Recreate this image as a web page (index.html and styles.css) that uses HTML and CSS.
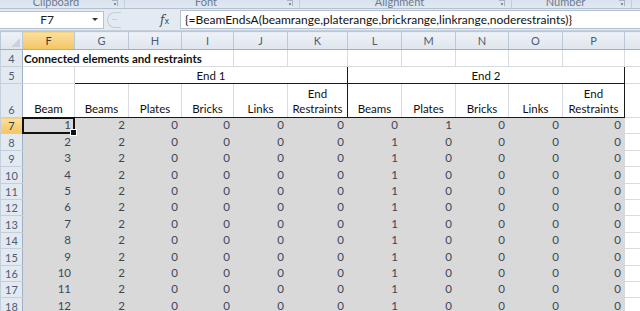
FILE: index.html
```html
<!DOCTYPE html>
<html lang="en">
<head>
    <meta charset="UTF-8">
    <title>Beam ends</title>
    <link rel="stylesheet" href="styles.css">
</head>
<body>
    <div class="ribbon">
        <div class="group g-clip"><span class="group-label">Clipboard</span><span class="launcher"></span></div>
        <div class="group g-font"><span class="group-label">Font</span><span class="launcher"></span></div>
        <div class="group g-align"><span class="group-label">Alignment</span><span class="launcher"></span></div>
        <div class="group g-num"><span class="group-label">Number</span><span class="launcher"></span></div>
    </div>

    <div class="formula-bar">
        <div class="name-box">
            <span class="name">F7</span>
            <span class="drop"></span>
        </div>
        <div class="grip"><span></span></div>
        <div class="fx"><i>f</i><small>x</small></div>
        <div class="formula">{=BeamEndsA(beamrange,platerange,brickrange,linkrange,noderestraints)}</div>
    </div>

    <table class="sheet">
        <colgroup>
            <col class="w-rh"><col class="w-f"><col class="w-g"><col class="w-h"><col class="w-i"><col class="w-j">
            <col class="w-k"><col class="w-l"><col class="w-m"><col class="w-n"><col class="w-o"><col class="w-p"><col class="w-q">
        </colgroup>
        <thead>
            <tr class="heads">
                <th class="corner"><span></span></th>
                <th class="on">F</th><th>G</th><th>H</th><th>I</th><th>J</th><th>K</th>
                <th>L</th><th>M</th><th>N</th><th>O</th><th>P</th><th></th>
            </tr>
        </thead>
        <tbody id="rows">
            <tr class="r4">
                <th class="rh">4</th>
                <td class="title" colspan="4">Connected elements and restraints</td>
                <td></td><td></td><td></td><td></td><td></td><td></td><td></td><td></td>
            </tr>
            <tr class="r5">
                <th class="rh">5</th>
                <td></td>
                <td class="end" colspan="5">End 1</td>
                <td class="end" colspan="5">End 2</td>
                <td></td>
            </tr>
            <tr class="r6">
                <th class="rh">6</th>
                <td class="lbl">Beam</td>
                <td class="lbl box-l">Beams</td><td class="lbl">Plates</td><td class="lbl">Bricks</td><td class="lbl">Links</td>
                <td class="lbl box-r">End<br>Restraints</td>
                <td class="lbl">Beams</td><td class="lbl">Plates</td><td class="lbl">Bricks</td><td class="lbl">Links</td>
                <td class="lbl box-r">End<br>Restraints</td>
                <td class="free"></td>
            </tr>
        </tbody>
    </table>

    <script>
        const body = document.getElementById("rows");

        for (let i = 0; i < 12; i++) {
            let values = i === 0
                ? [1, 2, 0, 0, 0, 0, 0, 1, 0, 0, 0]
                : [i + 1, 2, 0, 0, 0, 0, 1, 0, 0, 0, 0];
            let tr = document.createElement("tr");
            tr.className = "data";
            let head = `<th class="rh${i === 0 ? " on" : ""}">${i + 7}</th>`;
            let cells = values.map((v, c) => `<td class="${i === 0 && c === 0 ? "num active" : "num"}">${v}</td>`).join("");
            tr.innerHTML = head + cells + `<td class="free"></td>`;
            body.appendChild(tr);
        }
    </script>
</body>
</html>
```

FILE: styles.css
```css
* {
    margin: 0;
    padding: 0;
    box-sizing: border-box;
}

body {
    width: 640px;
    height: 311px;
    overflow: hidden;
    background: #fff;
    font-family: Lato, "Open Sans", sans-serif;
}

/* ribbon group captions (cut off at the top) */
.ribbon {
    display: flex;
    height: 9px;
    overflow: hidden;
    background: linear-gradient(#d9e2ed, #e1e8f1);
    border-bottom: 1px solid #b3c0d0;
}

.group {
    display: flex;
    align-items: flex-end;
    border-right: 1px solid #c3cedb;
}

.g-clip { width: 125px; }
.g-font { width: 175px; }
.g-align { width: 212px; }
.g-num { width: 120px; }

.group-label {
    flex: 1;
    text-align: center;
    font-size: 11px;
    line-height: 11px;
    margin-bottom: 1px;
    color: #6b7b91;
}

.launcher {
    width: 6px;
    height: 6px;
    margin: 0 6px 2px 0;
    border-top: 1px solid #a9b5c4;
    border-right: 1px solid #a9b5c4;
    position: relative;
}

.launcher::after {
    content: "";
    position: absolute;
    right: 1px;
    top: 2px;
    width: 2px;
    height: 2px;
    background: #7d8da2;
}

/* formula bar */
.formula-bar {
    display: flex;
    align-items: center;
    height: 22px;
    background: #e4eaf2;
    border-bottom: 1px solid #c5d0dd;
}

.name-box {
    display: flex;
    align-items: center;
    width: 104px;
    height: 18px;
    background: #fff;
    border: 1px solid #b4c1d1;
    border-left: none;
}

.name {
    flex: 1;
    text-align: center;
    font-size: 12px;
    color: #222;
    padding-left: 2px;
}

.drop {
    width: 0;
    height: 0;
    margin-right: 5px;
    border-left: 3px solid transparent;
    border-right: 3px solid transparent;
    border-top: 3px solid #333;
}

.grip {
    width: 14px;
    height: 16px;
    margin-left: 3px;
    border: 1px solid #c3ccd8;
    border-right: none;
    border-radius: 8px 0 0 8px;
    display: flex;
    align-items: center;
    justify-content: center;
}

.grip span {
    width: 5px;
    height: 1px;
    background: #c6ced9;
}

.fx {
    width: 20px;
    margin-left: 39px;
    font-family: "DejaVu Serif", serif;
    font-size: 12px;
    color: #4a4a4a;
}

.fx small {
    font-size: 8px;
    font-family: "DejaVu Sans", sans-serif;
}

.formula {
    flex: 1;
    height: 19px;
    line-height: 17px;
    background: #fff;
    border: 1px solid #b4c1d1;
    border-right: none;
    padding-left: 4px;
    font-size: 12px;
    color: #111;
    white-space: nowrap;
}

/* worksheet grid */
.sheet {
    table-layout: fixed;
    border-collapse: collapse;
    width: 640px;
    font-size: 11.5px;
}

.w-rh { width: 22px; }
.w-f { width: 52px; }
.w-g { width: 54px; }
.w-h { width: 53px; }
.w-i { width: 52px; }
.w-j { width: 54px; }
.w-k { width: 60px; }
.w-l { width: 54px; }
.w-m { width: 54px; }
.w-n { width: 53px; }
.w-o { width: 54px; }
.w-p { width: 62px; }
.w-q { width: 16px; }

td {
    border: 1px solid #d8dbe0;
    padding: 0 3px 1px;
    vertical-align: bottom;
    white-space: nowrap;
    color: #111;
}

.heads th {
    height: 18px;
    font-weight: normal;
    font-size: 11px;
    color: #4c5d74;
    background: linear-gradient(#eef2f7, #dfe5ed);
    border: 1px solid #bcc7d5;
    border-bottom-color: #9fb0c5;
}

.heads th.on {
    background: linear-gradient(#fbe0a0, #f3c55f);
    color: #3a3a3a;
}

.corner {
    position: relative;
}

.corner span {
    position: absolute;
    right: 2px;
    bottom: 2px;
    border-left: 9px solid transparent;
    border-bottom: 9px solid #c8d1dc;
}

.rh {
    font-weight: normal;
    font-size: 11px;
    text-align: center;
    vertical-align: bottom;
    padding-bottom: 1px;
    color: #4c5d74;
    background: #e3e9f1;
    border: 1px solid #c4cfdc;
    border-right-color: #9fb0c5;
}

.rh.on {
    background: linear-gradient(#fbe0a0, #f3c55f);
    color: #3a3a3a;
}

.r4 { height: 17px; }
.r5 { height: 17px; }
.r6 { height: 34px; }
.data { height: 16.4px; }

.title {
    font-weight: bold;
    padding-left: 1px;
}

.end {
    text-align: center;
    border: 1px solid #1a1a1a;
}

.lbl {
    text-align: center;
    line-height: 15px;
    white-space: normal;
    border-bottom: 1px solid #1a1a1a;
}

.box-l { border-left: 1px solid #1a1a1a; }
.box-r { border-right: 1px solid #1a1a1a; }

.r6 .free { border-bottom-color: #d8dbe0; }

.num {
    text-align: right;
    background: #d9d9d9;
    border-color: #d9d9d9;
    color: #3b4658;
    line-height: 14px;
}

.active {
    position: relative;
}

/* selection frame and fill handle on F7 */
.active::after {
    content: "";
    position: absolute;
    left: -1px;
    top: -1px;
    right: -1px;
    bottom: -1px;
    border: 2px solid #111;
}

.active::before {
    content: "";
    position: absolute;
    right: -3px;
    bottom: -3px;
    width: 5px;
    height: 5px;
    background: #111;
    border: 1px solid #fff;
    z-index: 1;
}
```
